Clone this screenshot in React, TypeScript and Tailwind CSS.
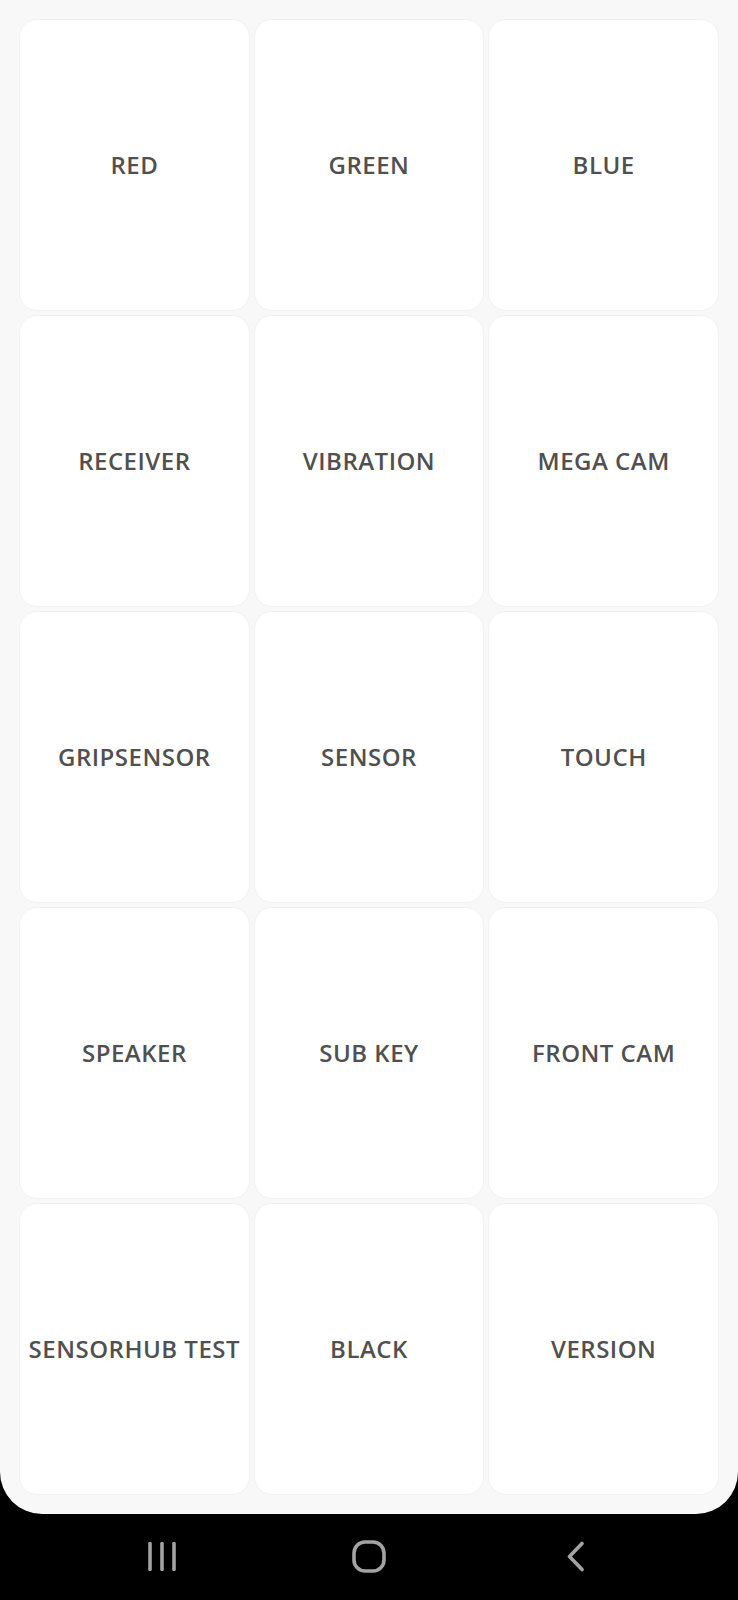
import React from "react";

const items = [
  "RED",
  "GREEN",
  "BLUE",
  "RECEIVER",
  "VIBRATION",
  "MEGA CAM",
  "GRIPSENSOR",
  "SENSOR",
  "TOUCH",
  "SPEAKER",
  "SUB KEY",
  "FRONT CAM",
  "SENSORHUB TEST",
  "BLACK",
  "VERSION",
];

function TestButton({ label }: { label: string }) {
  return (
    <button className="flex h-[292px] items-center justify-center rounded-[18px] border border-[#f2f2f2] bg-white">
      <span className="text-[24px] font-semibold tracking-[0.5px] text-[#505050]">
        {label}
      </span>
    </button>
  );
}

function NavBar() {
  return (
    <div className="flex flex-1 items-center justify-center gap-[167px] pb-[2px]">
      <div className="flex w-10 justify-center">
        <svg width="30" height="31" viewBox="0 0 30 31" fill="none">
          <g stroke="#a3a3a3" strokeWidth="3.6" strokeLinecap="round">
            <line x1="3" y1="2.5" x2="3" y2="28.5" />
            <line x1="15" y1="2.5" x2="15" y2="28.5" />
            <line x1="27" y1="2.5" x2="27" y2="28.5" />
          </g>
        </svg>
      </div>
      <div className="flex w-10 justify-center">
        <svg width="34" height="33" viewBox="0 0 34 33" fill="none">
          <rect
            x="2"
            y="2"
            width="30"
            height="29"
            rx="11"
            stroke="#a3a3a3"
            strokeWidth="3.6"
          />
        </svg>
      </div>
      <div className="flex w-10 justify-center">
        <svg width="20" height="31" viewBox="0 0 20 31" fill="none">
          <polyline
            points="16,2.5 3.5,15.5 16,28.5"
            stroke="#a3a3a3"
            strokeWidth="3.6"
            strokeLinecap="round"
            strokeLinejoin="round"
          />
        </svg>
      </div>
    </div>
  );
}

export default function App() {
  return (
    <div
      className="flex h-[1600px] w-full flex-col bg-black"
      style={{ fontFamily: '"Open Sans", "Noto Sans", sans-serif' }}
    >
      <div className="rounded-b-[42px] bg-[#f8f8f8] p-[19px]">
        <div className="grid grid-cols-3 gap-1">
          {items.map((label) => (
            <TestButton key={label} label={label} />
          ))}
        </div>
      </div>
      <NavBar />
    </div>
  );
}
